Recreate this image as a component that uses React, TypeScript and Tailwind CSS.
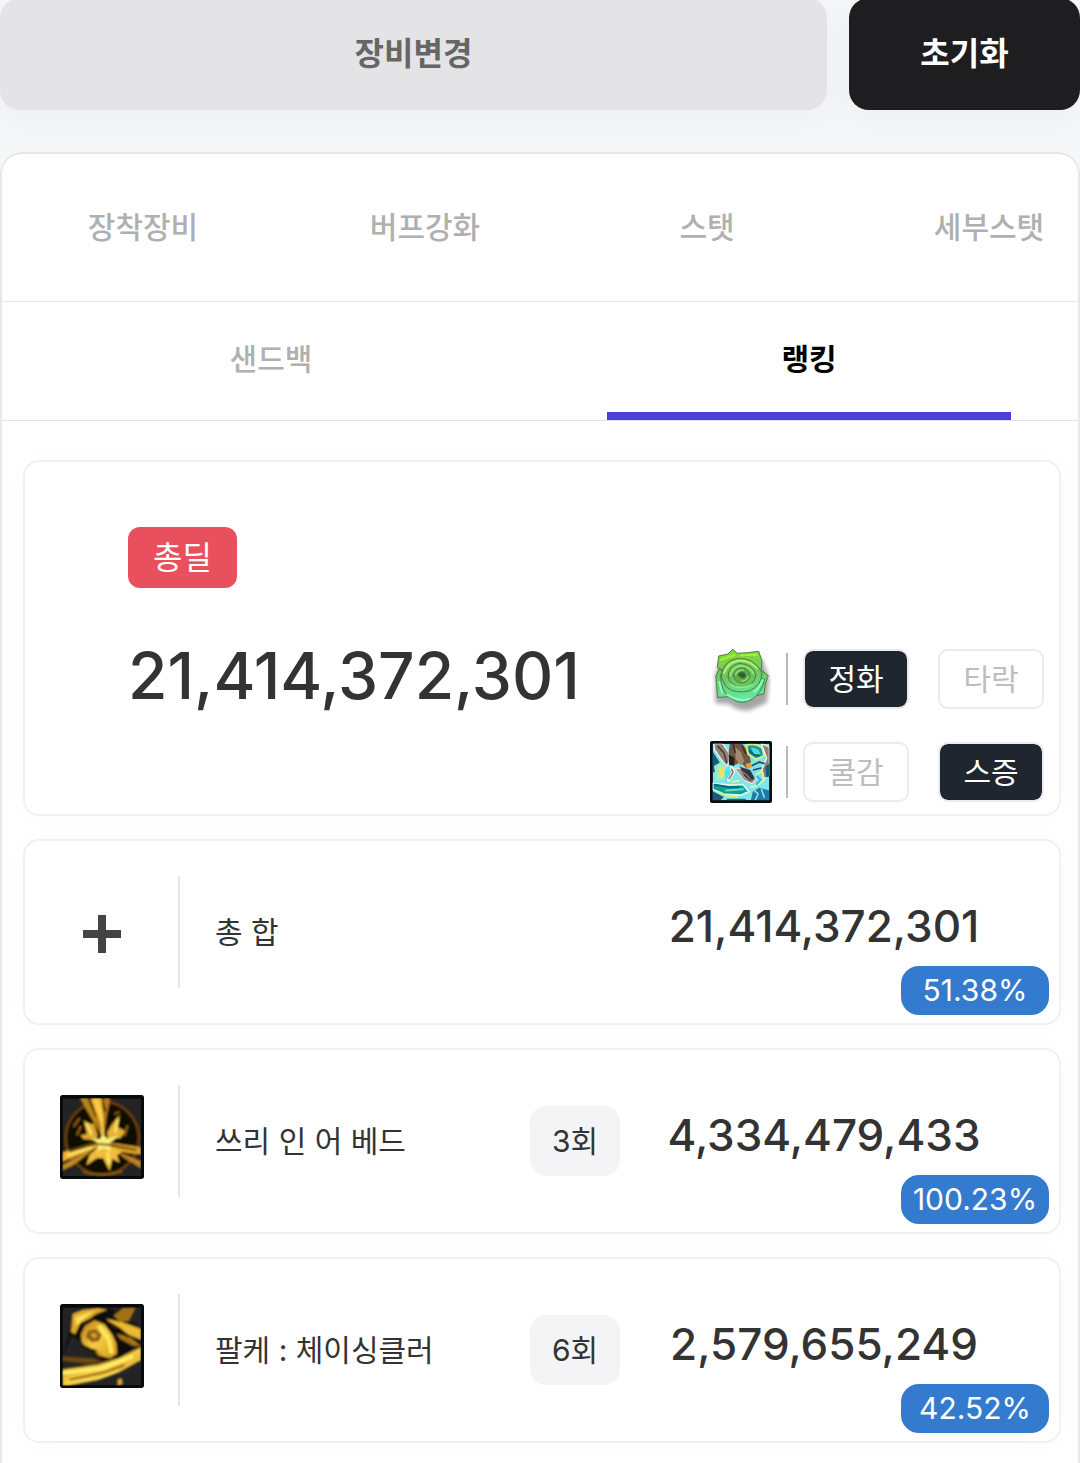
import React from 'react';
import clsx from 'clsx';

const TOP_TABS = ['장착장비', '버프강화', '스탯', '세부스탯'];
const BOTTOM_TABS = ['샌드백', '랭킹'];

const RoseIcon: React.FC = () => (
  <svg viewBox="33 21 180 204" className="mt-1 h-[68px] w-[60px] shrink-0" aria-hidden="true">
    <defs>
      <linearGradient id="rose" gradientUnits="userSpaceOnUse" x1="110" y1="30" x2="130" y2="186">
        <stop offset="0" stopColor="#86dc35" />
        <stop offset="0.45" stopColor="#6fc75c" />
        <stop offset="1" stopColor="#66eaa6" />
      </linearGradient>
      <filter id="roseShade" x="-20%" y="-20%" width="140%" height="140%">
        <feGaussianBlur stdDeviation="7" />
      </filter>
      <filter id="roseSoft">
        <feGaussianBlur stdDeviation="2" />
      </filter>
    </defs>
    <path d="M46 100 L46 190 L86 192 Q125 222 160 206 L200 188 L208 120 L188 60 L70 50Z" fill="#777" opacity="0.65" filter="url(#roseShade)" />
    <g filter="url(#roseSoft)" strokeLinejoin="round" strokeLinecap="round" stroke="#4c7d48" strokeWidth="3">
      <path d="M52 82 L56 48 L84 42 L98 28 L112 40 L142 38 L176 34 L186 62 L184 90 L120 110Z" fill="url(#rose)" />
      <path d="M48 108 L58 86 L90 120 L130 160 L92 170 L54 172Z" fill="url(#rose)" />
      <path d="M204 106 L186 92 L150 120 L140 150 L170 166 L192 162 L196 132Z" fill="url(#rose)" />
      <path d="M62 102 Q58 156 98 178 Q128 196 156 178 Q184 160 194 118 L120 100Z" fill="url(#rose)" />
      <path d="M64 110 Q68 62 110 56 Q160 50 186 98 Q186 134 150 152 Q104 164 78 140Z" fill="url(#rose)" />
      <path d="M84 112 Q84 76 118 70 Q158 72 168 104 Q162 138 128 144 Q92 140 84 112Z" fill="#69c65d" />
      <path d="M100 106 Q104 84 128 84 Q150 90 150 110 Q140 132 118 128 Q102 122 100 106Z" fill="#5eae48" />
      <path d="M114 106 Q116 94 130 96 Q140 102 136 112 Q126 120 114 106Z" fill="#2d6426" />
    </g>
    <g filter="url(#roseSoft)" fill="none" strokeLinecap="round">
      <path d="M72 100 Q82 68 116 62 Q150 60 172 86" stroke="#b6f27a" strokeWidth="5" />
      <path d="M91 106 Q96 80 124 77 Q150 80 160 100" stroke="#a6ec7e" strokeWidth="4" />
      <path d="M106 104 Q112 89 130 90 M124 124 Q140 122 145 110" stroke="#97dd70" strokeWidth="4" />
      <path d="M62 60 L88 50 L104 46 M122 46 L170 44" stroke="#a3f038" strokeWidth="6" />
      <path d="M58 126 L66 158 M82 164 Q118 188 148 176 M188 120 Q180 142 162 156" stroke="#86ffc8" strokeWidth="6" />
      <path d="M92 134 Q124 152 156 134" stroke="#89e99a" strokeWidth="5" />
    </g>
  </svg>
);

const BeastIcon: React.FC = () => (
  <svg viewBox="28 28 188 188" className="size-[62px] shrink-0" aria-hidden="true">
    <defs>
      <clipPath id="beastClip">
        <rect x="36" y="36" width="172" height="172" />
      </clipPath>
      <filter id="beastSoft">
        <feGaussianBlur stdDeviation="1.6" />
      </filter>
    </defs>
    <rect x="28" y="28" width="188" height="188" rx="6" fill="#080d12" />
    <g clipPath="url(#beastClip)">
      <rect x="36" y="36" width="172" height="172" fill="#7ee6ea" />
      <g filter="url(#beastSoft)" strokeLinejoin="round" strokeLinecap="round">
        <path d="M36 60 L62 100 L50 118 L36 124Z" fill="#125c7c" />
        <path d="M40 36 H66 L84 62 L86 92 L78 104 L62 84 L42 54Z" fill="#94837a" stroke="#eef0e4" strokeWidth="4" />
        <path d="M52 44 L70 64 L78 92" fill="none" stroke="#453c3a" strokeWidth="5" />
        <path d="M88 36 H126 L146 62 L152 92 L140 112 L120 92 L106 100 L88 98 L84 66Z" fill="#70594a" />
        <path d="M104 46 L122 62 L132 90 L120 102 L106 82Z" fill="#a58a72" />
        <path d="M84 70 L102 78 L102 104 L86 100Z" fill="#2b1f1c" />
        <path d="M98 36 L104 62 M126 44 L136 66" stroke="#3c2d28" strokeWidth="5" />
        <path d="M138 42 Q160 32 186 48 L192 72 L168 84 L144 68Z" fill="#1b9798" stroke="#d7f07c" strokeWidth="6" />
        <path d="M152 46 L174 54 L182 68 L162 72Z" fill="#4ddade" />
        <path d="M148 58 L162 70 L178 72" fill="none" stroke="#0d5663" strokeWidth="5" />
        <path d="M184 36 L208 46 V132 L190 144 L186 114 L200 80Z" fill="#8b8079" stroke="#f4f4ec" strokeWidth="4" />
        <path d="M196 106 L208 96 V136 L198 138Z" fill="#086075" />
        <path d="M40 104 L60 92 L80 112 L76 140 L48 150Z" fill="#9cebc0" />
        <path d="M52 110 L66 104 L74 120 L64 142 L50 134 L60 124Z" fill="#e2e866" />
        <path d="M72 118 L84 106 L92 134 L76 152Z" fill="#58dcea" />
        <path d="M94 110 L100 122 L84 146" fill="none" stroke="#f6f6ee" strokeWidth="10" />
        <path d="M94 114 L98 124 L86 142" fill="none" stroke="#8e7a72" strokeWidth="5" />
        <path d="M104 110 L120 112 L142 132 L168 144 L156 158 L132 148Z" fill="#a99286" stroke="#f2f2ea" strokeWidth="3" />
        <path d="M118 106 L150 116 L164 142 L150 150 L132 134Z" fill="#343644" />
        <path d="M128 122 L142 134 L152 146" fill="none" stroke="#857b83" strokeWidth="4" />
        <path d="M136 97 L150 95 L154 108 L140 112Z" fill="#f49b25" />
        <path d="M156 102 L178 92 L192 96 M160 116 L182 110" fill="none" stroke="#26475a" strokeWidth="5" />
        <path d="M168 130 L186 120 L192 146 L176 160" fill="none" stroke="#e4f99c" strokeWidth="5" />
        <path d="M172 136 L182 146 L170 158" fill="none" stroke="#2fb6cc" strokeWidth="6" />
        <path d="M36 156 L88 162 L128 160 L146 182 L122 192 L72 190 L36 174Z" fill="#08a097" stroke="#dafcf6" strokeWidth="5" />
        <path d="M42 160 L84 168 L116 168" fill="none" stroke="#0b5d6e" strokeWidth="5" />
        <path d="M76 178 L128 174" stroke="#62dccb" strokeWidth="6" />
        <path d="M36 180 L70 198 L60 208 H36Z" fill="#1e5878" />
        <path d="M54 182 L80 196 L112 198" fill="none" stroke="#d7ec7a" strokeWidth="6" />
        <path d="M82 206 H134" stroke="#0b737f" strokeWidth="6" />
        <path d="M158 180 L178 170 L208 178 V208 H152Z" fill="#2377a5" />
        <path d="M160 176 L174 188 L166 206 M184 174 L192 198" fill="none" stroke="#7ae8ee" strokeWidth="5" />
        <path d="M96 152 L116 148 M152 168 L168 164" stroke="#e7f59a" strokeWidth="5" />
      </g>
    </g>
  </svg>
);

const SkillFrame: React.FC<{ id: string; children: React.ReactNode }> = ({ id, children }) => (
  <svg viewBox="33 27 252 252" className="mb-2 size-[84px]" aria-hidden="true">
    <defs>
      <linearGradient id={`${id}Gold`} x1="0" y1="0" x2="1" y2="1">
        <stop offset="0" stopColor="#b87a14" />
        <stop offset="0.5" stopColor="#f6cd42" />
        <stop offset="1" stopColor="#d1961f" />
      </linearGradient>
      <clipPath id={`${id}Clip`}>
        <rect x="40" y="36" width="236" height="236" />
      </clipPath>
      <filter id={`${id}Soft`} x="-5%" y="-5%" width="110%" height="110%">
        <feGaussianBlur stdDeviation="2.5" />
      </filter>
    </defs>
    <rect x="33" y="27" width="252" height="252" rx="8" fill="#08090a" />
    <rect x="42" y="38" width="234" height="232" fill="#232325" />
    <g clipPath={`url(#${id}Clip)`}>
      <g filter={`url(#${id}Soft)`}>{children}</g>
    </g>
  </svg>
);

const BurstIcon: React.FC = () => (
  <SkillFrame id="burst">
    <circle cx="160" cy="156" r="110" fill="#0d0a06" stroke="#6b3f0d" strokeWidth="8" />
    <path d="M92 36 H116 L146 84 L158 150 L142 122Z" fill="#b98219" />
    <path d="M124 36 H158 L164 90 L164 156 L150 104Z" fill="#f4b934" />
    <path d="M164 36 H184 L172 96 L166 150Z" fill="#b87c1a" />
    <path d="M104 102 L116 112 L136 114 L146 150 L138 162 L104 160 L94 148 L114 144Z" fill="#dea72f" />
    <path d="M212 86 L206 124 L230 136 L214 156 L178 160 L174 140 L188 116Z" fill="#e3b036" />
    <path d="M40 198 L146 168 L160 178 L106 200 L40 228Z" fill="#efb033" />
    <path d="M40 236 L116 194 L132 192 L70 240 L40 254Z" fill="#c18821" />
    <path d="M168 168 L276 184 V206 L216 198 L170 184Z" fill="#dfa22c" />
    <path d="M200 196 L276 224 V248 L226 216Z" fill="#bd8020" />
    <path d="M148 182 L184 182 L220 196 L204 208 L212 230 L190 218 L182 254 L162 216 L144 216 L112 238 L122 206Z" fill="#f0bd3d" />
    <g fill="none" stroke="#ffe668" strokeWidth="8">
      <path d="M112 110 L128 146 M206 100 L198 140" />
      <path d="M140 40 L158 92 L162 168" stroke="#ffd44c" />
      <path d="M54 208 L130 184 M176 198 L180 234" />
    </g>
    <path d="M126 156 L152 160 L162 146 L176 158 L210 148 L182 172 L186 196 L164 186 L144 196 L150 174Z" fill="#fff07a" />
    <g fill="none" stroke="#2c1a04" strokeWidth="5">
      <path d="M60 196 L140 174 L176 176 L262 192" />
      <path d="M122 46 L142 92 M160 46 L170 76" />
    </g>
    <g fill="none" stroke="#8b5814" strokeWidth="7">
      <path d="M74 122 L92 96 M84 148 L96 120 M236 118 L226 150 M196 84 L212 78" />
      <path d="M100 258 Q156 276 220 256" />
    </g>
  </SkillFrame>
);

const SlashIcon: React.FC = () => (
  <SkillFrame id="slash">
    <path d="M44 178 L66 120 L96 140 L140 166 L150 194 L200 196 L276 150 V100 L180 40 L66 90Z" fill="#0d0b08" />
    <path d="M66 110 L70 56 L100 44 L148 38 L174 44 L142 56 L120 72 L94 84 L78 118Z" fill="#dfa92e" />
    <path d="M80 66 L140 46 L104 72 L82 94Z" fill="#fbe055" />
    <path d="M222 38 H260 L240 78 L214 82 L194 62Z" fill="#a37219" />
    <path d="M172 72 L220 82 L276 102 V134 L236 118 L188 92Z" fill="#eaba33" />
    <path d="M202 116 L244 126 L276 154 L252 152 L214 132Z" fill="#a87315" />
    <path d="M96 118 L108 92 L136 76 L166 88 L190 120 L202 146 L204 176 L184 190 L158 184 L142 164 L114 160 L98 142Z" fill="url(#slashGold)" />
    <path d="M110 126 L118 108 L140 102 L158 120 L150 138 L130 142Z" fill="#8b5b10" />
    <path d="M122 120 L136 112 L146 122 L138 132Z" fill="#cf9c30" />
    <path d="M150 92 L180 134 L188 176" fill="none" stroke="#ffe85c" strokeWidth="12" />
    <path d="M96 150 L134 168 L144 186 L162 196" fill="none" stroke="#211606" strokeWidth="8" />
    <path d="M142 166 L154 182" stroke="#cf962a" strokeWidth="8" />
    <path d="M40 184 L130 190 L160 200 L116 206 L40 198Z" fill="#70470d" />
    <path d="M40 222 L146 208 L210 190 L276 156 V196 L214 230 L146 256 L60 272 H40Z" fill="url(#slashGold)" />
    <path d="M40 234 L158 220 L252 184" fill="none" stroke="#fff06a" strokeWidth="10" />
    <path d="M62 254 L166 232 L226 210" fill="none" stroke="#8a5b12" strokeWidth="6" />
    <path d="M48 264 L160 246 L208 228" fill="none" stroke="#f9d84d" strokeWidth="8" />
    <path d="M206 252 L218 250 L222 268 L204 272Z" fill="#dca62c" />
    <path d="M142 62 L168 76 L212 102 L240 126" fill="none" stroke="#0c0904" strokeWidth="7" />
  </SkillFrame>
);

const PlusIcon: React.FC = () => (
  <svg viewBox="0 0 38 38" className="mt-1 size-[38px]" aria-hidden="true">
    <path d="M15 0h8v15h15v8H23v15h-8V23H0v-8h15z" fill="#444" />
  </svg>
);

const ROWS = [
  { name: '총 합', icon: <PlusIcon />, count: '', damage: '21,414,372,301', percent: '51.38%' },
  { name: '쓰리 인 어 베드', icon: <BurstIcon />, count: '3회', damage: '4,334,479,433', percent: '100.23%' },
  { name: '팔케 : 체이싱클러', icon: <SlashIcon />, count: '6회', damage: '2,579,655,249', percent: '42.52%' },
];

const OptionRow: React.FC<{ icon: React.ReactNode; options: string[]; selected: string }> = ({ icon, options, selected }) => (
  <div className="flex h-[60px] items-center">
    <div className="flex w-[62px] justify-center">{icon}</div>
    <div className="mr-[15px] ml-[14px] h-[52px] w-[2px] bg-[#b9b9b9]"></div>
    <div className="flex gap-[29px]">
      {options.map((option) => (
        <button
          key={option}
          type="button"
          aria-pressed={option === selected}
          className={clsx(
            'h-[60px] w-[106px] rounded-[10px] border-2 border-[#e9ebed] bg-clip-padding text-[30px]',
            option === selected ? 'bg-[#20262f] text-white' : 'bg-white text-[#bdbdbd]'
          )}
        >
          {option}
        </button>
      ))}
    </div>
  </div>
);

const App: React.FC = () => {
  return (
    <main className="flex min-h-screen flex-col overflow-hidden bg-[#f6f7f9] font-['Inter','Noto_Sans_CJK_KR',sans-serif] text-[#333]">
      <div className="-mt-[2px] flex gap-[22px]">
        <button type="button" className="h-28 flex-1 rounded-[20px] bg-[#e4e4e6] text-[32px] font-bold text-[#666] shadow-[0_10px_40px_rgba(0,0,0,0.04)]">
          장비변경
        </button>
        <button type="button" className="h-28 w-[231px] rounded-[20px] bg-[#1e1e20] text-[32px] font-bold text-white shadow-[0_10px_40px_rgba(0,0,0,0.04)]">
          초기화
        </button>
      </div>

      <section className="mt-[42px] flex-1 rounded-t-[22px] border-2 border-b-0 border-[#e6e8ea] bg-white">
        {/* Tabs */}
        <nav>
          <div className="flex h-[148px] overflow-hidden border-b border-[#e5e7e9]">
            {TOP_TABS.map((tab) => (
              <button key={tab} type="button" className="w-[282px] shrink-0 text-[30px] font-medium text-[#b0b0b0]">
                {tab}
              </button>
            ))}
          </div>
          <div className="flex h-[119px] border-b border-[#e0e2e5]">
            {BOTTOM_TABS.map((tab) => (
              <button
                key={tab}
                type="button"
                className={clsx('flex flex-1 flex-col items-center text-[30px]', tab === '랭킹' ? 'font-bold text-black' : 'font-medium text-[#b0b0b0]')}
              >
                <span className="flex h-[110px] items-center pt-1">{tab}</span>
                {tab === '랭킹' && <span className="h-2 w-3/4 bg-[#4b40d6]"></span>}
              </button>
            ))}
          </div>
        </nav>

        <div className="flex flex-col gap-[23px] pt-[39px] pr-[17px] pb-5 pl-[21px]">
          {/* Total damage */}
          <div className="flex min-h-[356px] justify-between rounded-2xl border-2 border-[#f0f1f3] bg-white shadow-[0_0_30px_rgba(0,0,0,0.02)]">
            <div className="pt-[65px] pl-[103px]">
              <span className="inline-flex h-[61px] w-[109px] items-center justify-center rounded-xl bg-[#e9505d] text-[32px] text-white">총딜</span>
              <p className="mt-12 text-[64px] leading-[80px] font-medium">21,414,372,301</p>
            </div>
            <div className="flex flex-col justify-end gap-[33px] pr-[15px] pb-3">
              <OptionRow icon={<RoseIcon />} options={['정화', '타락']} selected="정화" />
              <OptionRow icon={<BeastIcon />} options={['쿨감', '스증']} selected="스증" />
            </div>
          </div>

          {ROWS.map((row) => (
            <div key={row.name} className="relative flex h-[186px] items-center rounded-2xl border-2 border-[#f0f1f3] bg-white shadow-[0_0_30px_rgba(0,0,0,0.02)]">
              <div className="flex h-28 w-[155px] items-center justify-center border-r-2 border-[#e4e6e8]">{row.icon}</div>
              <h2 className="flex-1 pl-[35px] text-[30px]">{row.name}</h2>
              {row.count && (
                <span className="flex h-[70px] w-[90px] items-center justify-center rounded-2xl bg-[#f4f4f6] text-[30px]">{row.count}</span>
              )}
              <p className="mr-[31px] w-[408px] pb-3 text-center text-[44px] font-medium">{row.damage}</p>
              <span className="absolute right-[10px] bottom-2 flex h-[49px] w-[148px] items-center justify-center rounded-[18px] bg-[#347bd0] text-[30px] text-white">
                {row.percent}
              </span>
            </div>
          ))}
        </div>
      </section>
    </main>
  );
};

export default App;
